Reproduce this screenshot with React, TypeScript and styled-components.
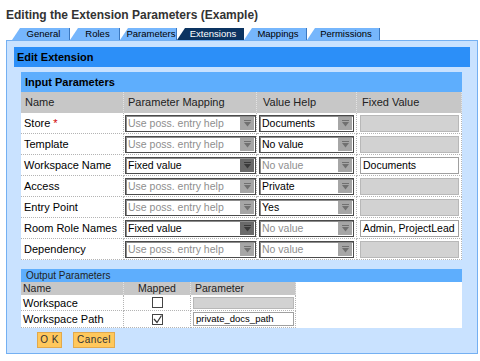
import React from 'react';
import styled, { createGlobalStyle } from 'styled-components';

const Global = createGlobalStyle`
  html, body { margin: 0; padding: 0; background: #fff; }
  body { font-family: "Liberation Sans", Arial, sans-serif; color: #000; }
  * { box-sizing: border-box; }
`;

const Page = styled.div`
  width: 480px;
  height: 361px;
  overflow: hidden;
`;

const Title = styled.h1`
  margin: 7px 0 5px 6px;
  font-size: 12px;
  line-height: 16px;
  font-weight: bold;
  color: #333;
`;

const TabBar = styled.div`
  display: flex;
  height: 12px;
  padding-left: 12px;
`;

const Tab = styled.div<{ $w: number; $active?: boolean }>`
  width: ${(p) => p.$w}px;
  height: 12px;
  clip-path: polygon(8px 0, 100% 0, 100% 100%, 0 100%);
  background: ${(p) => (p.$active ? '#0c3461' : '#76b6fc')};
  color: ${(p) => (p.$active ? '#fff' : '#000')};
  border-right: 1px solid ${(p) => (p.$active ? '#0c3461' : '#3b78c0')};
  font-size: 9.5px;
  line-height: 12px;
  text-align: center;
  padding-left: 6px;
  white-space: nowrap;
`;

const Frame = styled.div`
  margin-left: 6px;
  width: 472px;
  height: 314px;
  border: 1px solid #74b0f2;
  background: #c9e2ff;
  padding: 6px 7px 0 7px;
`;

const EditHeader = styled.div`
  height: 20px;
  background: #2c8ff8;
  font-size: 11px;
  font-weight: bold;
  line-height: 20px;
  padding-left: 3px;
  color: #000;
`;

const Body = styled.div`
  padding-left: 7px;
  width: 448px;
`;

const SectionHeader = styled.div<{ $small?: boolean }>`
  margin-top: ${(p) => (p.$small ? 9 : 5)}px;
  height: ${(p) => (p.$small ? 13 : 20)}px;
  line-height: ${(p) => (p.$small ? 13 : 20)}px;
  background: #5eaefd;
  font-size: ${(p) => (p.$small ? 10 : 11)}px;
  font-weight: ${(p) => (p.$small ? 'normal' : 'bold')};
  padding-left: ${(p) => (p.$small ? 5 : 4)}px;
  color: ${(p) => (p.$small ? '#222' : '#000')};
  width: 441px;
`;

const Grid = styled.div<{ $cols: string }>`
  display: grid;
  grid-template-columns: ${(p) => p.$cols};
  background: #fff;
`;

const HeadCell = styled.div<{ $h: number; $pad?: number; $center?: boolean }>`
  height: ${(p) => p.$h}px;
  line-height: ${(p) => p.$h}px;
  background: #c7c7c7;
  font-size: ${(p) => (p.$h > 15 ? 11 : 10.5)}px;
  color: #222;
  padding-left: ${(p) => (p.$center ? 0 : p.$pad ?? 4)}px;
  text-align: ${(p) => (p.$center ? 'center' : 'left')};
  border-right: 1px dotted #e4e4e4;
  white-space: nowrap;
`;

const Cell = styled.div<{ $h: number; $pad?: number; $center?: boolean }>`
  height: ${(p) => p.$h}px;
  display: flex;
  align-items: center;
  justify-content: ${(p) => (p.$center ? 'center' : 'flex-start')};
  padding-left: ${(p) => (p.$center ? 0 : p.$pad ?? 0)}px;
  border-right: 1px dotted #b4b4b4;
  border-bottom: 1px dotted #b4b4b4;
  font-size: 11px;
  white-space: nowrap;
`;

const Star = styled.span`
  color: #d00000;
  margin-left: 3px;
`;

const SelectBox = styled.div<{ $w: number; $dim?: boolean }>`
  width: ${(p) => p.$w}px;
  height: 17px;
  border: 1px solid #4a4a4a;
  box-shadow: inset 1px 1px 0 #8c8c8c;
  background: #fff;
  display: flex;
  align-items: stretch;
  font-size: 10.5px;
  color: ${(p) => (p.$dim ? '#8e8e8e' : '#000')};
`;

const SelectText = styled.span`
  flex: 1;
  padding: 0 0 0 2px;
  line-height: 15px;
  overflow: hidden;
  white-space: nowrap;
`;

const ArrowBox = styled.span<{ $dark?: boolean }>`
  width: 14px;
  margin: 1px 1px 1px 0;
  background: ${(p) => (p.$dark ? '#6a6a6a' : '#a6a6a6')};
  display: flex;
  align-items: center;
  justify-content: center;
`;

const TextBox = styled.div<{ $w: number; $h?: number; $disabled?: boolean; $fs?: number }>`
  width: ${(p) => p.$w}px;
  height: ${(p) => p.$h ?? 17}px;
  border: 1px solid ${(p) => (p.$disabled ? '#b8b8b8' : '#a0a0a0')};
  background: ${(p) => (p.$disabled ? '#d2d2d2' : '#fff')};
  font-size: ${(p) => p.$fs ?? 10.5}px;
  line-height: ${(p) => (p.$h ?? 17) - 2}px;
  padding-left: 2px;
  white-space: nowrap;
  overflow: hidden;
`;

const Check = styled.span`
  width: 11px;
  height: 11px;
  border: 1px solid #444;
  background: #fff;
  display: flex;
  align-items: center;
  justify-content: center;
`;

const Buttons = styled.div`
  display: flex;
  gap: 11px;
  margin-top: 4px;
  padding-left: 16px;
`;

const Button = styled.div<{ $w: number }>`
  width: ${(p) => p.$w}px;
  height: 16px;
  background: #ffc85c;
  border: 1px solid #e2a94c;
  font-size: 10px;
  line-height: 14px;
  text-align: center;
  color: #333;
  letter-spacing: 0.5px;
`;

const Arrow = ({ dark }: { dark?: boolean }) => (
  <ArrowBox $dark={dark}>
    <svg width="7" height="7" viewBox="0 0 7 7">
      <rect x="0" y="0" width="7" height="1" fill={dark ? '#3a3a3a' : '#707070'} />
      <path d="M0 2 H7 L3.5 6.5 Z" fill={dark ? '#3a3a3a' : '#707070'} />
    </svg>
  </ArrowBox>
);

const Select = ({ w, text, dim, dark }: { w: number; text: string; dim?: boolean; dark?: boolean }) => (
  <SelectBox $w={w} $dim={dim}>
    <SelectText>{text}</SelectText>
    <Arrow dark={dark} />
  </SelectBox>
);

type Row = {
  name: string;
  req?: boolean;
  map: 'help' | 'fixed';
  vh: string;
  vhDim?: boolean;
  fixed?: string;
};

const rows: Row[] = [
  { name: 'Store', req: true, map: 'help', vh: 'Documents' },
  { name: 'Template', map: 'help', vh: 'No value' },
  { name: 'Workspace Name', map: 'fixed', vh: 'No value', vhDim: true, fixed: 'Documents' },
  { name: 'Access', map: 'help', vh: 'Private' },
  { name: 'Entry Point', map: 'help', vh: 'Yes' },
  { name: 'Room Role Names', map: 'fixed', vh: 'No value', vhDim: true, fixed: 'Admin, ProjectLead' },
  { name: 'Dependency', map: 'help', vh: 'No value', vhDim: true },
];

const tabs = [
  { label: 'General', w: 58 },
  { label: 'Roles', w: 50 },
  { label: 'Parameters', w: 57 },
  { label: 'Extensions', w: 67, active: true },
  { label: 'Mappings', w: 63 },
  { label: 'Permissions', w: 73 },
];

export default function App() {
  return (
    <Page>
      <Global />
      <Title>Editing the Extension Parameters (Example)</Title>
      <TabBar>
        {tabs.map((t) => (
          <Tab key={t.label} $w={t.w} $active={t.active}>
            {t.label}
          </Tab>
        ))}
      </TabBar>
      <Frame>
        <EditHeader>Edit Extension</EditHeader>
        <Body>
          <SectionHeader>Input Parameters</SectionHeader>
          <Grid $cols="103px 133px 100px 105px">
            <HeadCell $h={21} $pad={4}>Name</HeadCell>
            <HeadCell $h={21} $pad={4}>Parameter Mapping</HeadCell>
            <HeadCell $h={21} $pad={6}>Value Help</HeadCell>
            <HeadCell $h={21} $pad={5}>Fixed Value</HeadCell>
            {rows.map((r) => (
              <React.Fragment key={r.name}>
                <Cell $h={21} $pad={3}>
                  {r.name}
                  {r.req && <Star>*</Star>}
                </Cell>
                <Cell $h={21} $pad={1}>
                  {r.map === 'help' ? (
                    <Select w={131} text="Use poss. entry help" dim />
                  ) : (
                    <Select w={131} text="Fixed value" dark />
                  )}
                </Cell>
                <Cell $h={21} $pad={2}>
                  <Select w={95} text={r.vh} dim={r.vhDim} />
                </Cell>
                <Cell $h={21} $pad={3}>
                  {r.fixed ? <TextBox $w={99}>{r.fixed}</TextBox> : <TextBox $w={99} $disabled />}
                </Cell>
              </React.Fragment>
            ))}
          </Grid>
          <SectionHeader $small>Output Parameters</SectionHeader>
          <Grid $cols="103px 67px 105px">
            <HeadCell $h={13} $pad={2}>Name</HeadCell>
            <HeadCell $h={13} $center>Mapped</HeadCell>
            <HeadCell $h={13} $pad={4}>Parameter</HeadCell>
            <Cell $h={16} $pad={2}>Workspace</Cell>
            <Cell $h={16} $center>
              <Check />
            </Cell>
            <Cell $h={16} $pad={2}>
              <TextBox $w={101} $h={12} $disabled />
            </Cell>
            <Cell $h={17} $pad={2}>Workspace Path</Cell>
            <Cell $h={17} $center>
              <Check>
                <svg width="9" height="9" viewBox="0 0 9 9">
                  <path d="M1 4 L4 7.5 L8.5 0.5" fill="none" stroke="#333" strokeWidth="1.2" />
                </svg>
              </Check>
            </Cell>
            <Cell $h={17} $pad={2}>
              <TextBox $w={101} $h={14} $fs={9.5}>private_docs_path</TextBox>
            </Cell>
          </Grid>
          <Buttons>
            <Button $w={25}>O K</Button>
            <Button $w={42}>Cancel</Button>
          </Buttons>
        </Body>
      </Frame>
    </Page>
  );
}
